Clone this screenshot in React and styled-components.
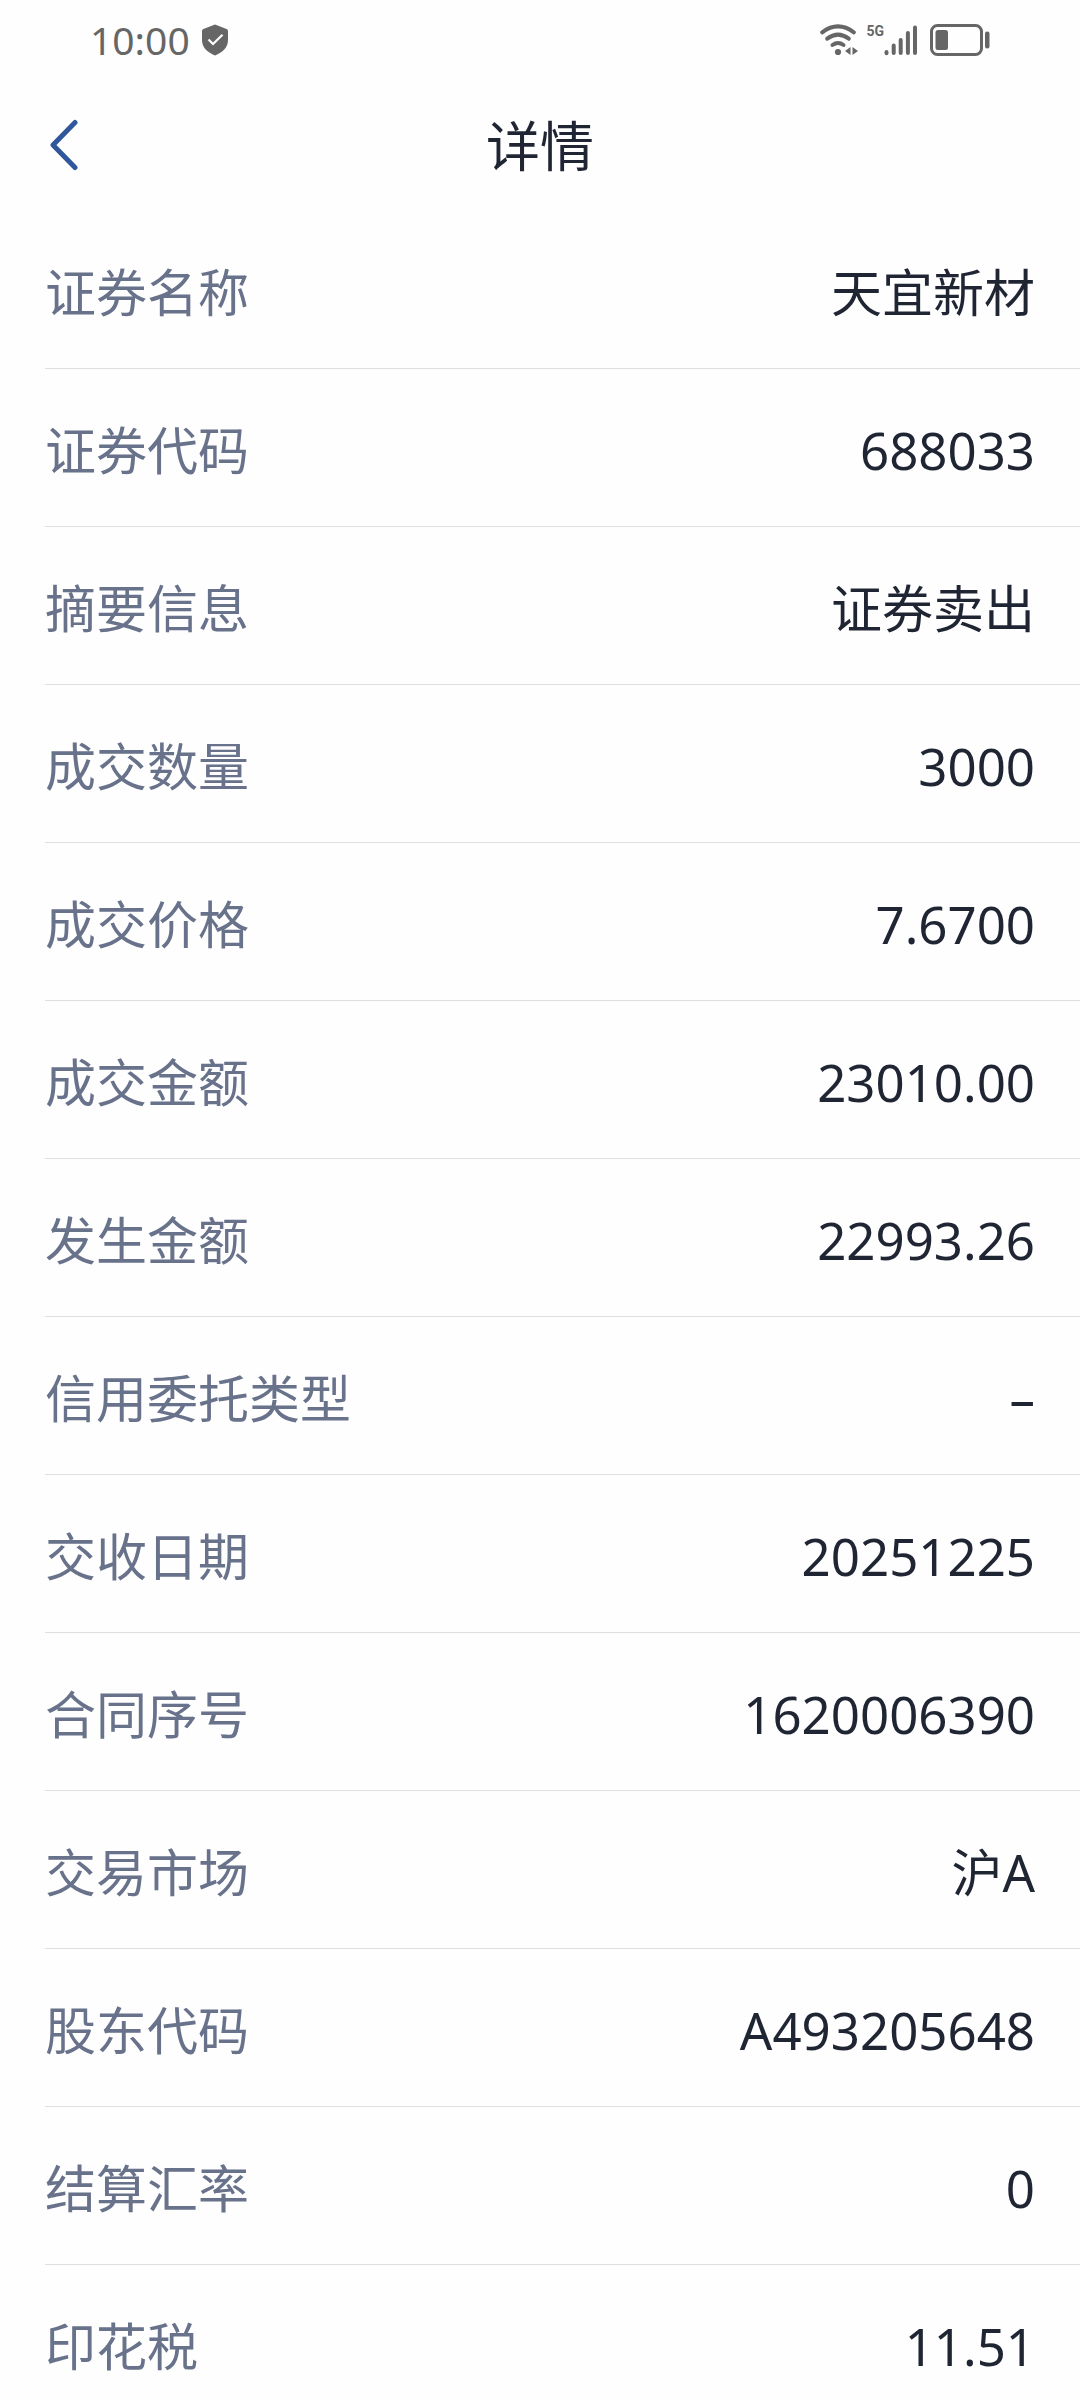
import styled, { createGlobalStyle } from 'styled-components'

const GlobalStyle = createGlobalStyle`
  * {
    box-sizing: border-box;
  }
  body {
    margin: 0;
    background: #fefefe;
    font-family: 'Noto Sans', 'Noto Sans CJK SC', sans-serif;
  }
`

const Screen = styled.div`
  height: 100vh;
  display: flex;
  flex-direction: column;
  color: #1f2533;
`

const StatusBar = styled.div`
  flex: none;
  height: 80px;
  padding: 0 90px;
  display: flex;
  align-items: center;
  justify-content: space-between;
  color: #666;
`

const StatusGroup = styled.div`
  display: flex;
  align-items: center;
  gap: ${props => props.$gap}px;
  svg {
    display: block;
  }
`

const Clock = styled.span`
  font-size: 39px;
  line-height: 80px;
`

const Signal = styled.div`
  display: flex;
  align-items: flex-start;
`

const NetworkType = styled.span`
  font: bold 14px Roboto, sans-serif;
  line-height: 14px;
`

const Header = styled.header`
  flex: none;
  height: 131px;
  padding: 0 45px;
  display: grid;
  grid-template-columns: 1fr auto 1fr;
  align-items: center;
`

const BackButton = styled.button`
  justify-self: start;
  padding: 0;
  border: 0;
  background: none;
  color: #30579b;
  svg {
    display: block;
  }
`

const Title = styled.h1`
  margin: 0;
  font-size: 54px;
  font-weight: 400;
  line-height: 80px;
`

const List = styled.dl`
  flex: 1;
  min-height: 0;
  margin: 0;
  padding-left: 45px;
  overflow-y: auto;
  scrollbar-width: none;
`

const Row = styled.div`
  height: 158px;
  padding: 4px 45px 0 0;
  display: flex;
  align-items: center;
  justify-content: space-between;
  border-bottom: 1px solid #dfdfdf;
  font-size: 51px;
  line-height: 76px;
`

const Label = styled.dt`
  color: #68728a;
`

const Value = styled.dd`
  margin: 0;
  text-align: right;
`

const ShieldIcon = () => (
  <svg width="26" height="32" viewBox="0 0 26 32" aria-hidden="true">
    <path d="M13 0.5 24.6 5Q26 5.600 26 7V16C26 23.500 20.500 28.500 13 31.500 5.500 28.500 0 23.500 0 16V7Q0 5.600 1.400 5Z" fill="currentColor" />
    <path d="M6.500 15.500 11 20 20.500 10.800" fill="none" stroke="#fefefe" strokeWidth="2.200" />
  </svg>
)

const WifiIcon = () => (
  <svg width="38" height="32" viewBox="0 0 38 32" aria-hidden="true">
    <g fill="none" stroke="currentColor" strokeWidth="4" strokeLinecap="round">
      <path d="M2.200 8.300Q18 -3.500 33.800 8.300" />
      <path d="M7.200 14.700Q18 6.500 28.800 14.700" />
      <path d="M12.500 21Q18 17 23.500 21" />
    </g>
    <circle cx="18" cy="28" r="3.100" fill="currentColor" />
    <path d="M30.500 23V31L25 27ZM32.500 23V31L38 27Z" fill="currentColor" />
  </svg>
)

const BarsIcon = () => (
  <svg width="38" height="32" viewBox="0 0 38 32" aria-hidden="true">
    <g stroke="currentColor" strokeWidth="4" strokeLinecap="round">
      <path d="M2.500 28V29.200M9.700 21.500V29M16.700 16V29M23.900 9V29M31 3.500V29" />
    </g>
  </svg>
)

const BatteryIcon = () => (
  <svg width="60" height="32" viewBox="0 0 60 32" aria-hidden="true">
    <rect x="1.500" y="1.500" width="50" height="29" rx="6" fill="none" stroke="currentColor" strokeWidth="3" />
    <rect x="5.500" y="6" width="12.500" height="20" rx="2.500" fill="currentColor" />
    <rect x="55" y="7.500" width="4.500" height="17" rx="2" fill="currentColor" />
  </svg>
)

const BackIcon = () => (
  <svg width="36" height="54" viewBox="0 0 36 54" aria-hidden="true">
    <path d="M30 3.500 8 26 30 48.500" fill="none" stroke="currentColor" strokeWidth="5" strokeLinecap="round" strokeLinejoin="round" />
  </svg>
)

const details = [
  ['证券名称', '天宜新材'],
  ['证券代码', '688033'],
  ['摘要信息', '证券卖出'],
  ['成交数量', '3000'],
  ['成交价格', '7.6700'],
  ['成交金额', '23010.00'],
  ['发生金额', '22993.26'],
  ['信用委托类型', '–'],
  ['交收日期', '20251225'],
  ['合同序号', '1620006390'],
  ['交易市场', '沪A'],
  ['股东代码', 'A493205648'],
  ['结算汇率', '0'],
  ['印花税', '11.51'],
]

export default () => (
  <Screen lang="zh-CN">
    <GlobalStyle />
    <StatusBar>
      <StatusGroup $gap={12}>
        <Clock>10:00</Clock>
        <ShieldIcon />
      </StatusGroup>
      <StatusGroup $gap={8}>
        <WifiIcon />
        <Signal>
          <NetworkType>5G</NetworkType>
          <BarsIcon />
        </Signal>
        <BatteryIcon />
      </StatusGroup>
    </StatusBar>
    <Header>
      <BackButton type="button" aria-label="返回">
        <BackIcon />
      </BackButton>
      <Title>详情</Title>
    </Header>
    <List>
      {details.map(([label, value]) => (
        <Row key={label}>
          <Label>{label}</Label>
          <Value>{value}</Value>
        </Row>
      ))}
    </List>
  </Screen>
)
